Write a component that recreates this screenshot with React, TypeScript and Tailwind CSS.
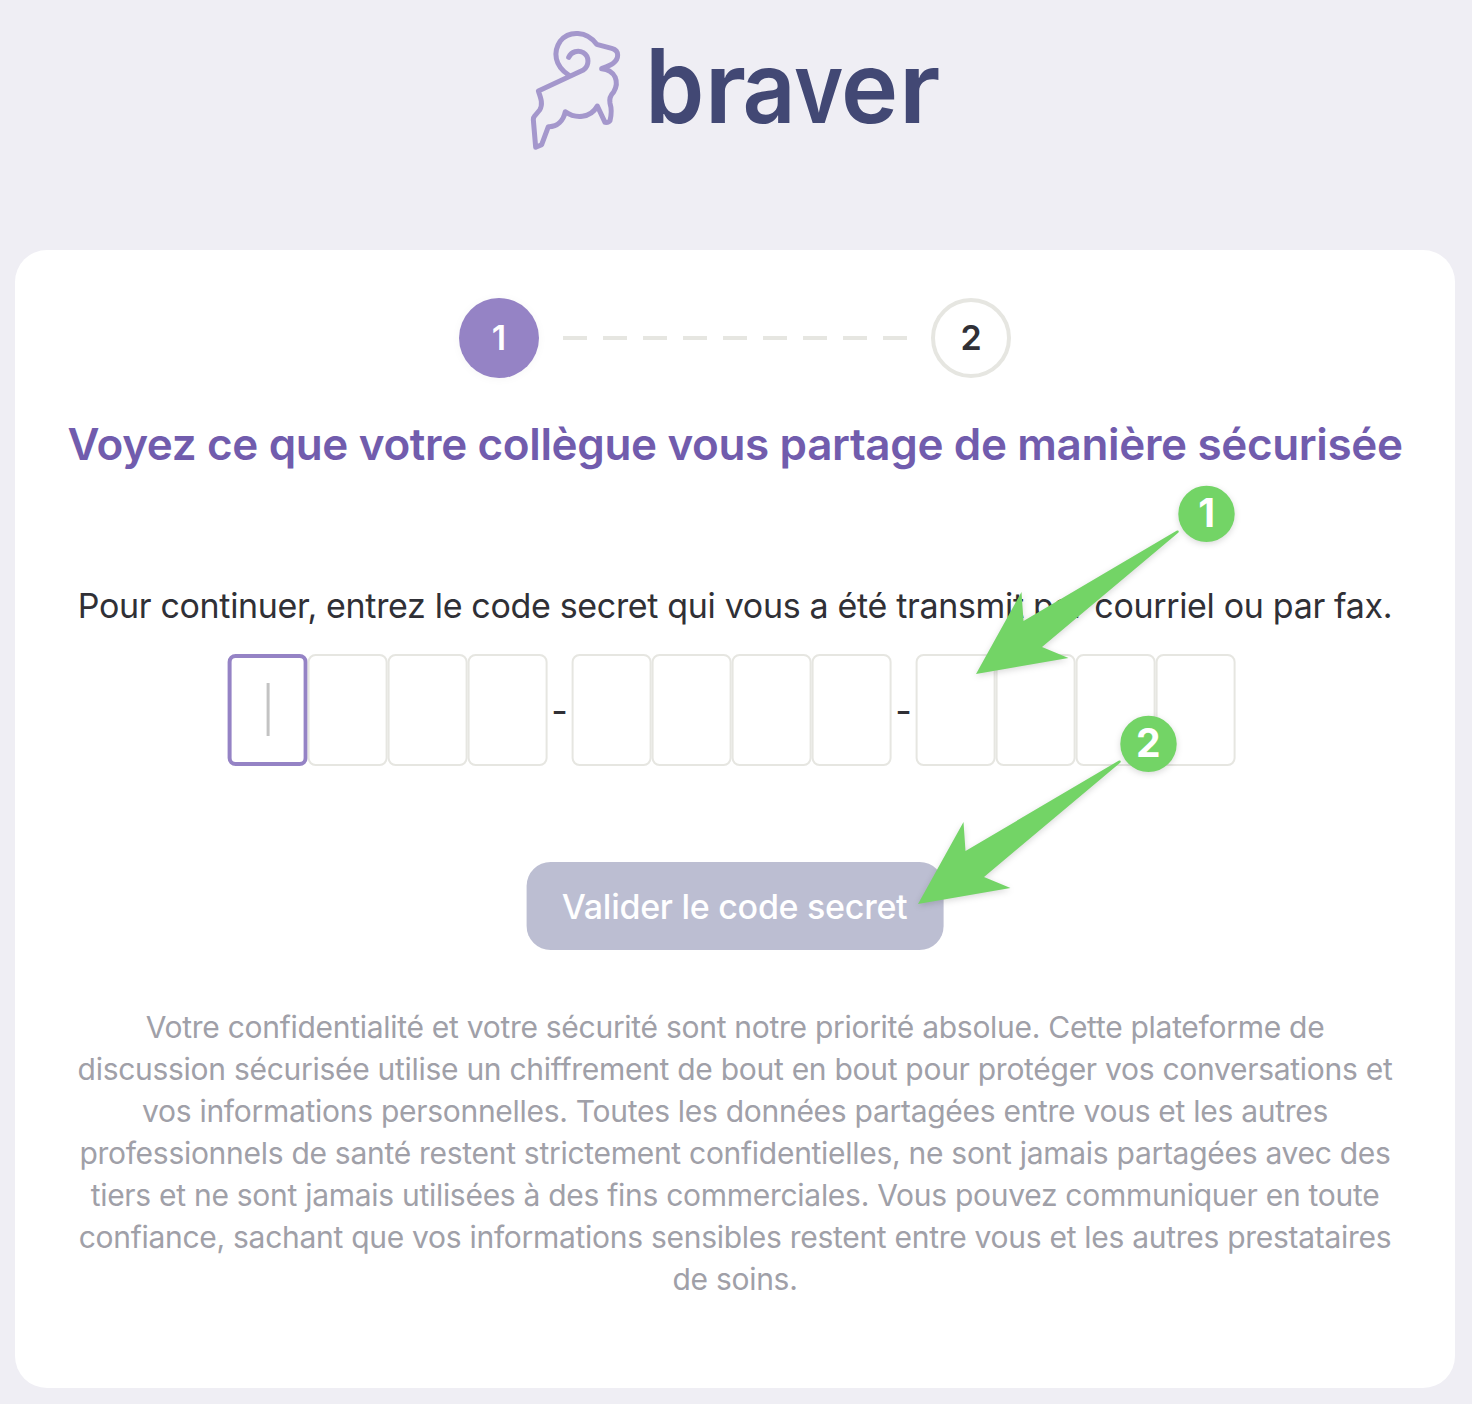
import React from "react";

const green = "#73d466";

function Ram() {
  return (
    <svg className="absolute left-[520px] top-5" width="120" height="140" viewBox="0 0 360 420" fill="none" stroke="#a497cc" strokeWidth="15" strokeLinecap="round" strokeLinejoin="round">
      <path d="M146 112C154 95 174 89 190 98C208 109 209 136 190 150L55 213C62 233 70 252 59 270L44 288Q40 292 40 299L47 382L65 374L85 320C112 321 130 302 136 275C165 296 211 296 232 258L255 307Q267 308 270 302C274 286 275 266 270 250C267 235 270 227 281 216C298 188 288 150 245 146C270 136 293 128 293 105C293 94 286 88 275 85L230 73C200 32 147 31 121 63C98 96 104 138 146 165" />
    </svg>
  );
}

function Wordmark() {
  return (
    <svg className="absolute left-[640px] top-[30px] overflow-visible" width="310" height="110" viewBox="0 0 310 110" fill="#424874" fontFamily="Inter" fontWeight="600" fontSize="104">
      <text transform="translate(5.300 93.300) scale(.91 .985)">b</text>
      <text transform="translate(64.500 93.300) scale(1.010 .955)">r</text>
      <text transform="translate(102.500 93.300) scale(.89 .955)">a</text>
      <text transform="translate(154 93.300) scale(.81 .955)">v</text>
      <text transform="translate(201 93.300) scale(.93 .955)">e</text>
      <text transform="translate(258.800 93.300) scale(1.010 .955)">r</text>
    </svg>
  );
}

function Cell({ active = false }: { active?: boolean }) {
  return (
    <div className={active ? "flex h-28 w-20 items-center justify-center rounded-lg border-4 border-[#9583c5]" : "h-28 w-20 rounded-lg border-2 border-[#e6e6e1]"}>
      {active && <span className="mb-px h-[53px] w-[3px] bg-[#c3c3c3]" />}
    </div>
  );
}

function Pointer({ n, className }: { n: string; className: string }) {
  return (
    <div className={className}>
      <svg width="260" height="190" viewBox="0 0 260 190" className="absolute left-0 top-0 overflow-visible drop-shadow-[0_2px_3px_rgba(0,0,0,0.15)]">
        <path d="M0 189L45.500 107L47.500 136L201 45.500Q203.500 45 202.500 47.500L66 162L92.500 173Z" fill={green} />
        <circle cx="230.500" cy="28.900" r="28.200" fill={green} />
      </svg>
      <span className="absolute left-[202.6px] top-0 flex h-14 w-14 items-center justify-center text-[39px] font-bold text-white">{n}</span>
    </div>
  );
}

const lines = [
  "Votre confidentialité et votre sécurité sont notre priorité absolue. Cette plateforme de",
  "discussion sécurisée utilise un chiffrement de bout en bout pour protéger vos conversations et",
  "vos informations personnelles. Toutes les données partagées entre vous et les autres",
  "professionnels de santé restent strictement confidentielles, ne sont jamais partagées avec des",
  "tiers et ne sont jamais utilisées à des fins commerciales. Vous pouvez communiquer en toute",
  "confiance, sachant que vos informations sensibles restent entre vous et les autres prestataires",
  "de soins.",
];

export default function App() {
  return (
    <div className="relative h-[1404px] w-[1472px] overflow-hidden bg-[#efeef4] font-['Inter',sans-serif]">
      <header className="h-[250px]">
        <Ram />
        <Wordmark />
      </header>
      <main className="ml-[15px] flex h-[1138px] w-[1440px] flex-col items-center rounded-[32px] bg-white pt-12">
        <div className="flex items-center gap-6 text-[34px] font-semibold">
          <div className="flex h-20 w-20 items-center justify-center rounded-full bg-[#9583c5] pb-0.5 text-white shadow-[0_1px_10px_rgba(0,0,0,0.04)]">1</div>
          <div className="flex gap-4">
            {Array.from({ length: 9 }, (_, i) => <span key={i} className="h-1 w-6 bg-[#e6e6e1]" />)}
          </div>
          <div className="flex h-20 w-20 items-center justify-center rounded-full border-4 border-[#e6e6e1] pb-0.5 text-[#303036]">2</div>
        </div>
        <h1 className="mt-[39px] h-[54px] whitespace-nowrap text-[44px] font-semibold leading-[54px] tracking-[-0.355px] text-[#715cad]">Voyez ce que votre collègue vous partage de manière sécurisée</h1>
        <p className="mt-[111px] h-[48px] whitespace-nowrap text-[34px] leading-[48px] tracking-[-0.33px] text-[#303036]">Pour continuer, entrez le code secret qui vous a été transmit par courriel ou par fax.</p>
        <div className="mr-[6px] mt-6 flex -translate-x-[0.4px] text-[36px] text-[#303036]">
          {[0, 1, 2].map((g) => (
            <React.Fragment key={g}>
              {g > 0 && <span className="flex w-6 items-center justify-center pt-0.5">-</span>}
              {[0, 1, 2, 3].map((c) => <Cell key={c} active={g === 0 && c === 0} />)}
            </React.Fragment>
          ))}
        </div>
        <button className="mt-24 flex h-[88px] w-[417px] -translate-x-[0.4px] items-center justify-center rounded-3xl bg-[#bcbed2] text-[34px] font-medium tracking-[-0.28px] text-white">Valider le code secret</button>
        <div className="mt-14 text-center text-[30px] leading-[42px] tracking-[-0.283px] text-[#a0a0a8]">
          {lines.map((l) => <p key={l} className="whitespace-nowrap">{l}</p>)}
        </div>
      </main>
      <Pointer n="1" className="absolute left-[976px] top-[485px]" />
      <Pointer n="2" className="absolute left-[917.6px] top-[715px]" />
    </div>
  );
}
